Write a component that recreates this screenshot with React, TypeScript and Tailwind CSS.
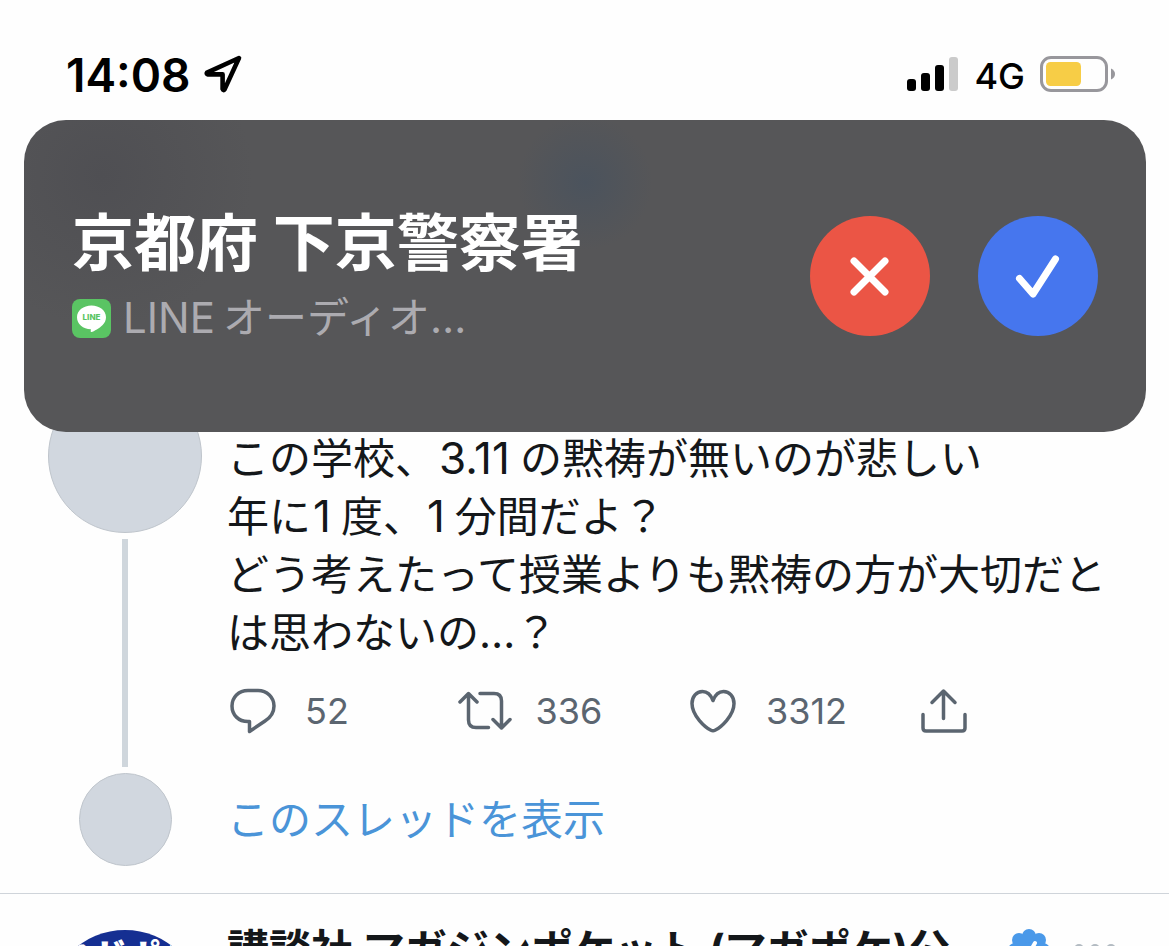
import React from "react";

const strokeProps = {
  fill: "none",
  stroke: "currentColor",
  strokeLinecap: "round" as const,
  strokeLinejoin: "round" as const,
};

function StatusBar() {
  return (
    <header className="flex h-[120px] items-center justify-between pt-8 pr-[54px] pb-1 pl-[66px] text-black">
      <div className="flex items-center gap-3">
        <time className="pt-0.5 text-[46px] leading-[56px] font-semibold">14:08</time>
        <svg width="40" height="40" viewBox="0 0 40 40" {...strokeProps} strokeWidth="4.6" aria-label="位置情報">
          <path d="M36 4 L4 18.6 Q3 20 5 20.4 L19.6 20.4 L19.6 35 Q20.4 37 21.6 35.400 Z" />
        </svg>
      </div>
      <div className="flex items-center gap-[15px]">
        <svg width="52" height="36" viewBox="0 0 52 36" aria-label="電波強度">
          <rect x="0" y="23" width="9" height="12" rx="3" />
          <rect x="14" y="17" width="9" height="18" rx="3" />
          <rect x="28" y="9" width="9" height="26" rx="3" />
          <rect x="42" y="1" width="9" height="34" rx="3" fill="#cbcbcb" />
        </svg>
        <span className="pt-1 text-[36px] leading-[44px] font-medium">4G</span>
        <svg width="75" height="36" viewBox="0 0 75 36" aria-label="バッテリー">
          <rect x="1.500" y="1.500" width="65" height="33" rx="9.500" fill="none" stroke="#98979c" strokeWidth="3" />
          <rect x="6" y="6" width="35" height="24" rx="4.500" fill="#f7cd46" />
          <path d="M71 12.500 Q75 14.500 75 18 Q75 21.500 71 23.500 Z" fill="#98979c" />
        </svg>
      </div>
    </header>
  );
}

function LineIcon() {
  return (
    <svg width="39" height="39" viewBox="0 0 39 39" aria-hidden="true">
      <rect width="39" height="39" rx="8" fill="#5ac463" />
      <path
        d="M19.500 6.500 C27.500 6.500 34 11.600 34 18.200 C34 21.400 32.600 24 30.400 26.200 C27.600 29 22 32.400 19.400 33 C18.300 33.200 18.800 31.800 18.900 30.200 C11 30 5 24.900 5 18.200 C5 11.600 11.500 6.500 19.500 6.500 Z"
        fill="#fff"
      />
      <text x="19.500" y="21.200" textAnchor="middle" fontSize="8" fontWeight="800" fontFamily="Inter" fill="#5ac463">
        LINE
      </text>
    </svg>
  );
}

function CallBanner() {
  return (
    <section className="absolute top-[120px] right-[23px] left-6 flex h-[312px] items-center justify-between rounded-[42px] bg-[#565658] bg-[radial-gradient(circle_at_50%_20%,#4b535d_0,transparent_11%),radial-gradient(circle_at_7%_18%,#4f4f53_0,transparent_14%)] px-12">
      <div className="pt-1.5">
        <h1 className="text-[62px] leading-[72px] font-bold text-white">京都府 下京警察署</h1>
        <p className="mt-1.5 flex items-center gap-3 text-[42px] leading-[64px] text-[#acabb0]">
          <LineIcon />
          <span>
            LINE<span className="ml-2">オーディオ…</span>
          </span>
        </p>
      </div>
      <div className="flex gap-12">
        <button type="button" aria-label="拒否" className="flex size-[120px] items-center justify-center rounded-full bg-[#eb5545] text-white">
          <svg width="60" height="60" viewBox="0 0 60 60" {...strokeProps} strokeWidth="7">
            <path d="M14 15 L45 46 M45 15 L14 46" />
          </svg>
        </button>
        <button type="button" aria-label="応答" className="flex size-[120px] items-center justify-center rounded-full bg-[#4676ee] text-white">
          <svg width="60" height="60" viewBox="0 0 60 60" {...strokeProps} strokeWidth="7">
            <path d="M11.500 32.500 L25 48 L47.500 13" />
          </svg>
        </button>
      </div>
    </section>
  );
}

function Action({ label, count, children }: { label: string; count?: string; children: React.ReactNode }) {
  return (
    <button type="button" aria-label={label} className="flex h-11 items-center gap-6 text-[36px] leading-[44px]">
      {children}
      {count && <span>{count}</span>}
    </button>
  );
}

function Actions() {
  return (
    <div className="mt-[27px] grid grid-cols-4 text-[#5b6570]">
      <Action label="返信" count="52">
        <svg width="54" height="46" viewBox="0 0 54 46" {...strokeProps} strokeWidth="3.500">
          <path d="M21 2.500 H31 C40 2.500 47 9.500 47 18 C47 24.500 43.500 29.500 38 33 L22.500 43.500 V33.500 H21 C11.500 33.500 5 27 5 18 C5 9.500 11.500 2.500 21 2.500 Z" />
        </svg>
      </Action>
      <Action label="リツイート" count="336">
        <svg width="54" height="46" viewBox="0 0 54 46" {...strokeProps} strokeWidth="3.500">
          <path d="M2 14 L10.500 5.500 L19 14 M10.500 6 V32 Q10.500 39.500 18 39.500 H30.500 M22 5.500 H36 Q43.500 5.500 43.500 13 V39 M35 31.500 L43.500 40 L52 31.500" />
        </svg>
      </Action>
      <Action label="いいね" count="3312">
        <svg width="54" height="46" viewBox="0 0 54 46" {...strokeProps} strokeWidth="3.500">
          <path d="M25 12.500 C22.500 6 18.500 3.500 14.500 3.500 C8.500 3.500 4 8.500 4 15.500 C4 28 17.500 39.500 23 42.300 Q25 43.300 27 42.300 C32.500 39.500 46 28 46 15.500 C46 8.500 41.500 3.500 35.500 3.500 C31.500 3.500 27.500 6 25 12.500 Z" />
        </svg>
      </Action>
      <Action label="共有">
        <svg width="54" height="46" viewBox="0 0 54 46" {...strokeProps} strokeWidth="3.500">
          <path d="M13 14.500 L24.500 3 L36 14.500 M24.500 3.500 V30.500 M4 26.500 V40 Q4 43 7 43 H43 Q46 43 46 40 V26.500" />
        </svg>
      </Action>
    </div>
  );
}

function Num({ children }: { children: React.ReactNode }) {
  return <span className="ml-0.5 mr-2.5 text-[44px] leading-none">{children}</span>;
}

function Tweet() {
  return (
    <article className="border-b border-[#cfd4da] pr-5 pb-[27px] pl-12">
      <div className="flex gap-[25px]">
        <div className="flex w-[154px] flex-col items-center">
          <div className="size-[154px] rounded-full border border-[#bfc5cc] bg-[#d1d7df]" />
          <div className="my-1.5 w-1.5 grow bg-[#cfd6dc]" />
        </div>
        <div className="flex-1 pt-[51px] pb-10">
          <p className="text-[42px] leading-[58px] text-[#14171a]">
            この学校、<Num>3.11</Num>の黙祷が無いのが悲しい
            <br />
            年に<Num>1</Num>度、<Num>1</Num>分間だよ？
            <br />
            どう考えたって授業よりも黙祷の方が大切だと
            <br />
            は思わないの…？
          </p>
          <Actions />
        </div>
      </div>
      <div className="flex items-center gap-[25px]">
        <div className="flex w-[154px] justify-center">
          <div className="size-[93px] rounded-full border border-[#bfc5cc] bg-[#d1d7df]" />
        </div>
        <a href="#thread" className="text-[42px] leading-[58px] text-[#4a94d8]">
          このスレッドを表示
        </a>
      </div>
    </article>
  );
}

function NextTweet() {
  return (
    <article className="flex gap-[25px] pt-[27px] pr-[51px] pl-12">
      <div className="pt-[9px]">
        <div className="flex size-[154px] justify-center overflow-hidden rounded-full bg-[#152f92] pt-1.5">
          <span className="text-[36px] leading-[44px] font-black whitespace-nowrap text-white">マガポケ</span>
        </div>
      </div>
      <div className="flex h-[58px] flex-1 items-center justify-between">
        <div className="flex items-center gap-14">
          <h2 className="text-[42px] leading-[58px] font-bold whitespace-nowrap text-[#14171a]">講談社 マガジンポケット (マガポケ)公</h2>
          <svg width="44" height="44" viewBox="0 0 44 44" aria-label="認証済み">
            <g fill="#4a99e9">
              <circle cx="22" cy="22" r="15" />
              <circle cx="22" cy="8" r="7" />
              <circle cx="32" cy="12" r="7" />
              <circle cx="36" cy="22" r="7" />
              <circle cx="32" cy="32" r="7" />
              <circle cx="22" cy="36" r="7" />
              <circle cx="12" cy="32" r="7" />
              <circle cx="8" cy="22" r="7" />
              <circle cx="12" cy="12" r="7" />
            </g>
            <path d="M14 23 L20 29 L28 15" fill="none" stroke="#fff" strokeWidth="4" strokeLinecap="round" />
          </svg>
        </div>
        <button type="button" aria-label="その他" className="self-start pt-[23px] text-[#b3bbc2]">
          <svg width="46" height="10" viewBox="0 0 46 10" fill="currentColor">
            <circle cx="7" cy="5" r="5" />
            <circle cx="23" cy="5" r="5" />
            <circle cx="39" cy="5" r="5" />
          </svg>
        </button>
      </div>
    </article>
  );
}

export default function App() {
  return (
    <div className="relative h-screen overflow-hidden bg-[#fefefe] font-[Inter,'Noto_Sans_CJK_JP',sans-serif]" lang="ja">
      <StatusBar />
      <main className="pt-[259px]">
        <Tweet />
        <NextTweet />
      </main>
      <CallBanner />
    </div>
  );
}
